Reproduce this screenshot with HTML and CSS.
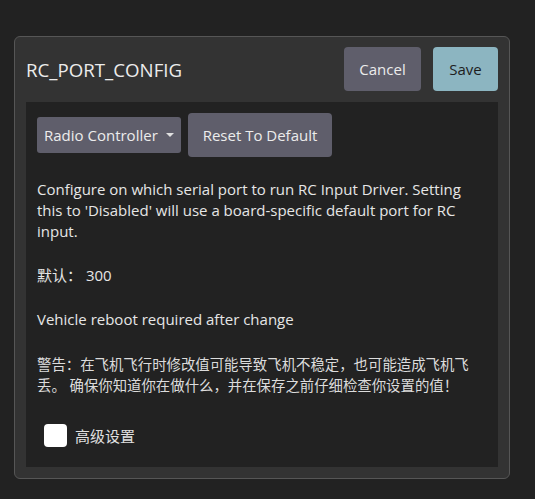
FILE: index.html
```html
<!DOCTYPE html>
<html>
<head>
<meta charset="utf-8">
<link rel="stylesheet" href="styles.css">
</head>
<body>
<div class="page">
  <div class="dialog">
    <div class="header">
      <div class="title">RC_PORT_CONFIG</div>
      <div class="actions">
        <button class="btn cancel">Cancel</button>
        <button class="btn save">Save</button>
      </div>
    </div>
    <div class="content">
      <div class="toolbar">
        <div class="combo">Radio Controller <span class="caret"></span></div>
        <button class="btn reset">Reset To Default</button>
      </div>
      <p class="desc">Configure on which serial port to run RC Input Driver. Setting this to 'Disabled' will use a board-specific default port for RC input.</p>
      <p class="line">默认： 300</p>
      <p class="line">Vehicle reboot required after change</p>
      <p class="warn">警告：在飞机飞行时修改值可能导致飞机不稳定，也可能造成飞机飞丢。 确保你知道你在做什么，并在保存之前仔细检查你设置的值！</p>
      <label class="check"><span class="box"></span><span class="label">高级设置</span></label>
    </div>
  </div>
</div>
</body>
</html>
```

FILE: styles.css
```css
html, body {
  margin: 0;
  padding: 0;
  background: #222222;
}
body {
  font-family: "Open Sans", "Noto Sans CJK SC", sans-serif;
  color: #e6e6e6;
  width: 535px;
  height: 499px;
  overflow: hidden;
}
.page {
  padding: 36px 0 0 14px;
}
.dialog {
  box-sizing: border-box;
  width: 496px;
  height: 443px;
  background: #333333;
  border: 1px solid #565656;
  border-radius: 6px;
  padding: 0 11px 11px 11px;
  display: flex;
  flex-direction: column;
}
.header {
  display: flex;
  align-items: center;
  justify-content: space-between;
  padding: 10px 0 11px 0;
}
.title {
  font-size: 18.7px;
  color: #ececec;
}
.actions {
  display: flex;
  gap: 12px;
}
.btn {
  font-family: "Open Sans", sans-serif;
  font-size: 15px;
  border: none;
  border-radius: 4px;
  background: #5f5e6b;
  color: #ececec;
  height: 44px;
  padding: 0;
  cursor: default;
}
.cancel { width: 77px; }
.save {
  width: 65px;
  background: #8cb5c1;
  color: #1e1e1e;
}
.content {
  flex: 1;
  background: #222222;
  padding: 11px;
}
.toolbar {
  display: flex;
  align-items: center;
  gap: 7px;
}
.combo {
  box-sizing: border-box;
  width: 144px;
  height: 36px;
  background: #5f5e6b;
  border-radius: 3px;
  font-size: 15px;
  color: #ececec;
  display: flex;
  align-items: center;
  padding-left: 7px;
  gap: 8px;
}
.caret {
  width: 0;
  height: 0;
  border-left: 4px solid transparent;
  border-right: 4px solid transparent;
  border-top: 4px solid #e0e0e0;
}
.reset { width: 144px; }
p {
  margin: 0;
  font-size: 15px;
  line-height: 21px;
}
.desc { margin-top: 22px; }
.line { margin-top: 23px; }
.warn {
  margin-top: 24px;
  font-size: 14.4px;
  color: #dcdcdc;
}
.check {
  display: flex;
  align-items: center;
  gap: 8px;
  margin-top: 28px;
  padding-left: 7px;
}
.box {
  width: 23px;
  height: 23px;
  background: #ffffff;
  border-radius: 4px;
}
.label {
  font-size: 15px;
  color: #e0e0e0;
}
```
